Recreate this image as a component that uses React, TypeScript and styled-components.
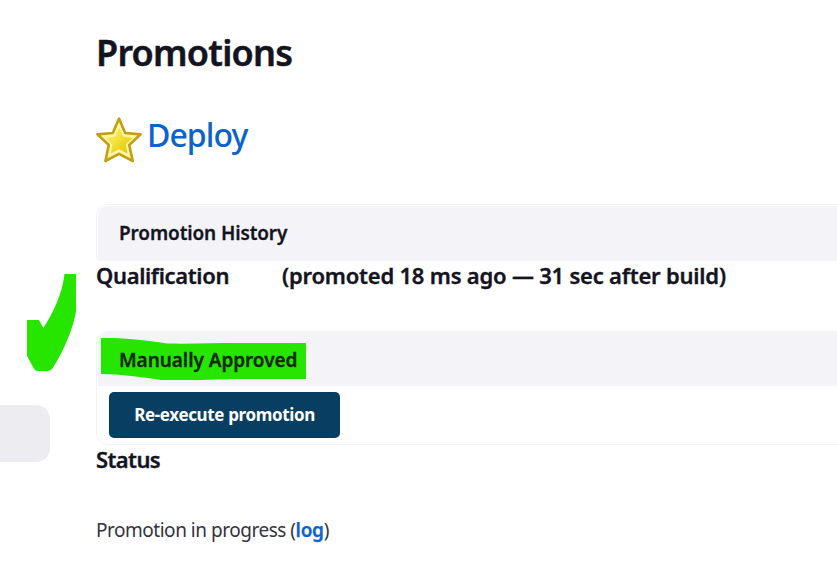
import React from "react";
import styled, { createGlobalStyle } from "styled-components";

const GlobalStyle = createGlobalStyle`
  * { box-sizing: border-box; }
  html, body { margin: 0; padding: 0; background: #fff; overflow: hidden; }
  body { font-family: "Noto Sans", "Open Sans", sans-serif; color: #14141f; }
  h1, h2, h3, p { margin: 0; }
`;

const Page = styled.div`
  position: relative;
  display: flex;
  width: 100%;
  height: 588px;
  overflow: hidden;
`;

const Sidebar = styled.nav`
  flex: 0 0 96px;
  padding-top: 405px;
`;

const SidebarItem = styled.div`
  width: 50px;
  height: 57px;
  border-radius: 0 14px 14px 0;
  background: #ededf1;
`;

const Main = styled.main`
  flex: 1;
  min-width: 0;
  display: flex;
  flex-direction: column;
  padding-top: 27px;
`;

const Title = styled.h1`
  height: 50px;
  font-size: 36px;
  line-height: 51px;
  font-weight: 600;
  letter-spacing: -0.75px;
  -webkit-text-stroke: 0.5px currentColor;
`;

const ProcessHeading = styled.h2`
  display: flex;
  gap: 4px;
  height: 53px;
  margin-top: 33px;
  font-size: 32px;
  line-height: 50px;
  font-weight: 400;
`;

const StarIcon = styled.svg`
  width: 48px;
  height: 48px;
  margin-top: 5px;
  margin-left: -1px;
`;

const Link = styled.a`
  color: #0b63cb;
  text-decoration: none;
  font-weight: 600;
`;

const ProcessLink = styled(Link)`
  font-weight: 500;
  letter-spacing: -0.95px;
`;

const Panel = styled.section`
  width: calc(100% + 20px);
  border: 1px solid #f3f3f7;
  border-radius: 12px;
`;

const HistoryPanel = styled(Panel)`
  height: 57px;
  margin-top: 41px;
  padding: 1px 1px 0;
  border-bottom-width: 0;
  border-radius: 12px 12px 4px 4px;
`;

const ApprovalPanel = styled(Panel)`
  height: 114px;
  margin-top: 41px;
  padding: 0 1px 6px;
`;

const PanelHeader = styled.h3<{ $spacing: string }>`
  height: 55px;
  padding-left: 21px;
  border-radius: 10px 0 0 0;
  background: #f3f3f8;
  font-size: 19px;
  line-height: 55px;
  font-weight: 600;
  letter-spacing: ${(p) => p.$spacing};
  -webkit-text-stroke: 0.3px currentColor;
`;

const ApprovalHeader = styled(PanelHeader)`
  height: 54px;
  line-height: 56px;
`;

const SectionHeading = styled.h2<{ $spacing: string }>`
  display: flex;
  height: 29px;
  font-size: 22px;
  line-height: 29px;
  font-weight: 600;
  letter-spacing: ${(p) => p.$spacing};
  white-space: nowrap;
  -webkit-text-stroke: 0.35px currentColor;
`;

const HeadingLabel = styled.span`
  width: 186px;
  letter-spacing: -0.36px;
`;

const Marked = styled.span`
  position: relative;
  display: inline-block;
  isolation: isolate;
  color: #102808;
`;

const Highlight = styled.svg`
  position: absolute;
  z-index: -1;
  left: -18px;
  top: 5px;
  width: 206px;
  height: 44px;
`;

const Button = styled.button`
  display: block;
  width: 231px;
  height: 46px;
  margin: 6px 0 0 11px;
  padding: 0 0 1px;
  border: 0;
  border-radius: 5px;
  background: #073e61;
  color: #fff;
  font: 700 17px/44px "Noto Sans", "Open Sans", sans-serif;
  letter-spacing: -0.36px;
`;

const StatusText = styled.p`
  margin-top: 41px;
  font-size: 19px;
  line-height: 30px;
  letter-spacing: -0.48px;
  color: #333340;
`;

const LogLink = styled(Link)`
  letter-spacing: -0.3px;
  -webkit-text-stroke: 0.25px currentColor;
`;

const CheckStroke = styled.svg`
  position: absolute;
  left: 27px;
  top: 273px;
  width: 50px;
  height: 99px;
`;

const STAR = "M24 3.6 L30.2 18 L45.6 19.4 L34.2 30 L37.8 46 L24 38.8 L10.4 46 L13.8 30 L2.4 19.4 L17.8 18 Z";

export default function App() {
  return (
    <>
      <GlobalStyle />
      <Page>
        <Sidebar>
          <SidebarItem />
        </Sidebar>
        <Main>
          <Title>Promotions</Title>
          <ProcessHeading>
            <StarIcon viewBox="0 0 48 48" aria-hidden="true">
              <defs>
                <linearGradient id="gold" x1="0" y1="0" x2="1" y2="1">
                  <stop offset="0.15" stopColor="#f8ed6c" />
                  <stop offset="0.5" stopColor="#f2df35" />
                  <stop offset="0.85" stopColor="#e9c80e" />
                </linearGradient>
              </defs>
              <path d={STAR} fill="#fdf6a8" stroke="#c19f10" strokeWidth="2.6" strokeLinejoin="round" />
              <path
                d="M24 12.5 L28.2 21.6 L37.5 22.9 L30.8 29.2 L32.4 38.4 L24 34.2 L15.8 38.4 L17.3 29.2 L10.7 22.9 L20 21.6 Z"
                fill="url(#gold)"
              />
            </StarIcon>
            <ProcessLink>Deploy</ProcessLink>
          </ProcessHeading>

          <HistoryPanel>
            <PanelHeader $spacing="-0.12px">Promotion History</PanelHeader>
          </HistoryPanel>
          <SectionHeading $spacing="-0.21px">
            <HeadingLabel>Qualification</HeadingLabel>
            <span>(promoted 18 ms ago — 31 sec after build)</span>
          </SectionHeading>

          <ApprovalPanel>
            <ApprovalHeader $spacing="-0.06px">
              <Marked>
                Manually Approved
                <Highlight viewBox="0 0 206 44" aria-hidden="true">
                  <path d="M0 1 C24 1 45 3 66 6.5 C90 7 112 6 135 6 H205 V42 H135 C112 43 82 43 60 43 C40 40 20 37 0 37 Z" fill="#26e600" />
                </Highlight>
              </Marked>
            </ApprovalHeader>
            <Button>Re-execute promotion</Button>
          </ApprovalPanel>
          <SectionHeading $spacing="-0.6px">Status</SectionHeading>

          <StatusText>
            Promotion in progress (<LogLink>log</LogLink>)
          </StatusText>
        </Main>
        <CheckStroke viewBox="0 0 50 99" aria-hidden="true">
          <path
            d="M37.5 1 H49 V38 C47 54 35 82 25 96 Q23 98 21 98 H11 Q8 98 6 94 L0 83 V47 H12 L16.3 55 C26 40 35 22 37.5 1 Z"
            fill="#26e600"
          />
        </CheckStroke>
      </Page>
    </>
  );
}
